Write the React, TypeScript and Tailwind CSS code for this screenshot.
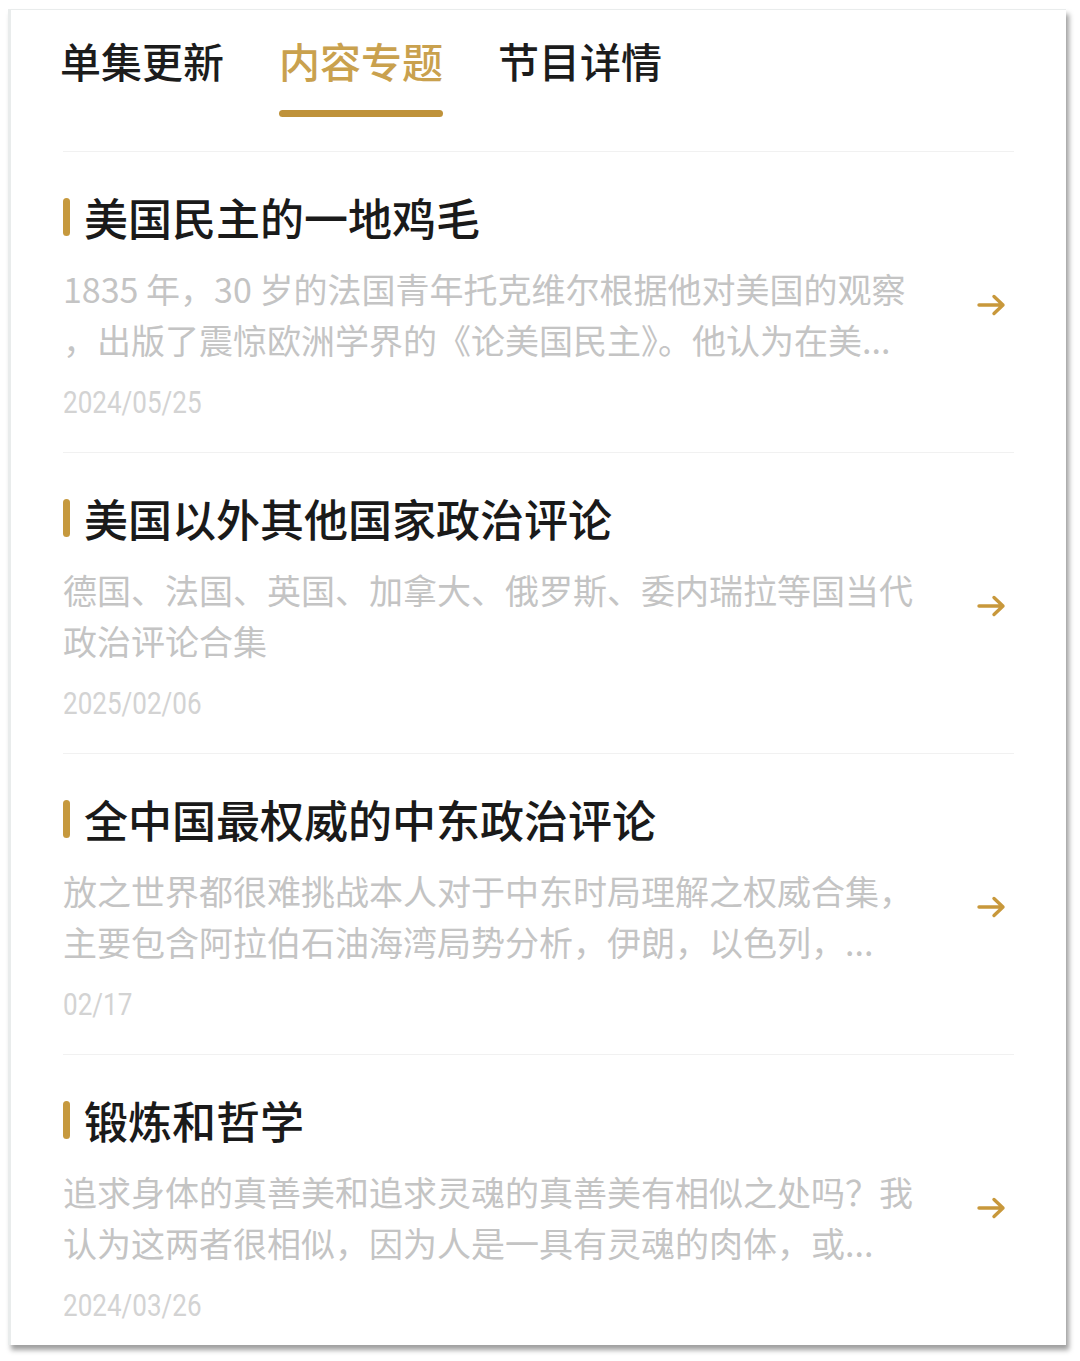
const tabs = ["单集更新", "内容专题", "节目详情"];

const topics = [
  {
    title: "美国民主的一地鸡毛",
    lines: [
      "1835 年，30 岁的法国青年托克维尔根据他对美国的观察",
      "，出版了震惊欧洲学界的《论美国民主》。他认为在美...",
    ],
    date: "2024/05/25",
  },
  {
    title: "美国以外其他国家政治评论",
    lines: ["德国、法国、英国、加拿大、俄罗斯、委内瑞拉等国当代", "政治评论合集"],
    date: "2025/02/06",
  },
  {
    title: "全中国最权威的中东政治评论",
    lines: [
      "放之世界都很难挑战本人对于中东时局理解之权威合集，",
      "主要包含阿拉伯石油海湾局势分析，伊朗，以色列，...",
    ],
    date: "02/17",
  },
  {
    title: "锻炼和哲学",
    lines: [
      "追求身体的真善美和追求灵魂的真善美有相似之处吗？我",
      "认为这两者很相似，因为人是一具有灵魂的肉体，或...",
    ],
    date: "2024/03/26",
  },
];

const ArrowRight = () => (
  <svg width="32" height="26" viewBox="0 0 32 26" fill="none" className="shrink-0">
    <path
      d="M3 13h24M18 4.5l9 8.5-9 8.5"
      stroke="#c8983b"
      strokeWidth="3.4"
      strokeLinecap="round"
      strokeLinejoin="round"
    />
  </svg>
);

export default function App() {
  return (
    <div
      className="w-[1080px] h-[1361px] bg-white pt-[9px] pl-[8px]"
      style={{ fontFamily: '"Noto Sans CJK SC", "Noto Sans", sans-serif' }}
    >
      <div className="w-[1058px] h-[1336px] overflow-hidden bg-white border-l-[3px] border-t border-[#e9ecec] shadow-[3px_5px_5px_rgba(0,0,0,0.38)] px-[52px]">
        {/* tab bar */}
        <div className="flex gap-[55px] pt-[24px] -ml-[3px]">
          {tabs.map((t, i) => (
            <div key={t} className="flex flex-col items-center">
              <span
                className={
                  "text-[41px] leading-[52px] font-medium " +
                  (i === 1 ? "text-[#c9a14e]" : "text-[#1c1c1c]")
                }
              >
                {t}
              </span>
              <div
                className={
                  "mt-[24px] h-[7px] w-full rounded-full " + (i === 1 ? "bg-[#bf923a]" : "bg-transparent")
                }
              />
            </div>
          ))}
        </div>

        <div className="mt-[34px]">
          {topics.map((item) => (
            <div key={item.title} className="border-t border-[#f1f1f1] flex items-center pt-[37px] pb-[29px]">
              <div className="flex-1 min-w-0">
                <div className="flex items-center gap-[14px]">
                  <span className="w-[7px] h-[38px] rounded-full bg-[#c6993e]" />
                  <span className="text-[44px] leading-[56px] font-medium text-[#1a1a1a] whitespace-nowrap">
                    {item.title}
                  </span>
                </div>
                <div className="mt-[18px] text-[34px] leading-[51px] text-[#c4c4c4]">
                  {item.lines.map((l) => (
                    <div key={l} className="whitespace-nowrap">
                      {l}
                    </div>
                  ))}
                </div>
                <div
                  className="mt-[18px] block w-fit origin-left scale-x-[0.84] text-[31px] leading-[40px] text-[#d3d3d3]"
                  style={{ fontFamily: "Roboto, sans-serif" }}
                >
                  {item.date}
                </div>
              </div>
              <div className="pr-[6px] pl-[20px] -mt-[2px]">
                <ArrowRight />
              </div>
            </div>
          ))}
        </div>
      </div>
    </div>
  );
}
